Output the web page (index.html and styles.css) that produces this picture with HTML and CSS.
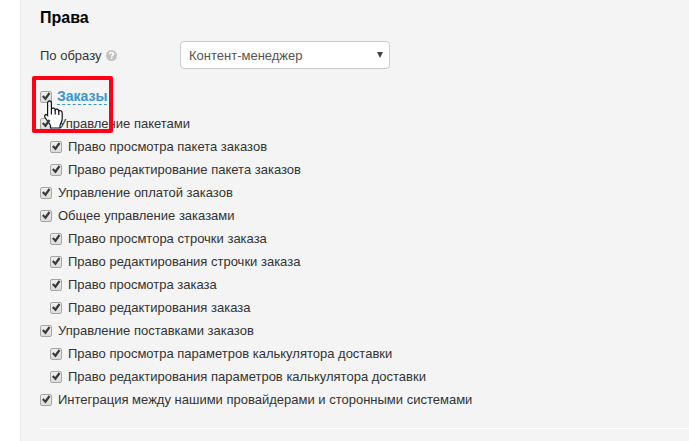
FILE: index.html
```html
<!DOCTYPE html>
<html lang="ru">

<head>
    <meta charset="UTF-8">
    <meta name="viewport" content="width=device-width, initial-scale=1.0">
    <title>Права</title>
    <link rel="stylesheet" href="styles.css">
</head>

<body>
    <form class="panel">
        <h2 class="title">Права</h2>

        <div class="field">
            <label class="field-label" for="preset">По образу
                <svg class="help" viewBox="0 0 11 11" aria-hidden="true">
                    <circle cx="5.5" cy="5.5" r="5.5" fill="#c2c2c2"/>
                    <path d="M3.6 4.3C3.6 1.8 7.5 1.9 7.4 4.1C7.3 5.4 5.6 5.3 5.6 6.7" fill="none" stroke="#fff" stroke-width="1.5"/>
                    <path d="M4.8 7.5h1.6v1.5H4.8z" fill="#fff"/>
                </svg>
            </label>
            <div class="select-wrap">
                <select class="select" id="preset">
                    <option>Контент-менеджер</option>
                </select>
            </div>
        </div>

        <div class="group">
            <input type="checkbox" id="orders" aria-label="Заказы" checked>
            <a class="group-link" href="#rights">Заказы</a>
            <div class="frame"></div>
            <svg class="pointer" viewBox="0 0 19 29" aria-hidden="true">
                <path d="M3.6 15V3C3.6 .2 7.4 .2 7.4 3V9C8 7.7 11 7.8 11.2 9.8C12 8.6 14.6 9 14.8 11C15.8 10 18.2 10.8 18.2 13V19C18.2 22 16 23.5 16 26V28H6.5V25.5C5 22.5 2.8 20.5 1 17.5C0 15 2 13.4 3.6 15.5Z" fill="#fff" stroke="#111126" stroke-width="1.2"/>
                <path d="M7.4 9V14.5M11.2 9.8V14.5M14.8 11V15" fill="none" stroke="#111126" stroke-width="1.2"/>
            </svg>
        </div>

        <ul class="rights" id="rights">
            <li><label><input type="checkbox" checked>Управление пакетами</label>
                <ul>
                    <li><label><input type="checkbox" checked>Право просмотра пакета заказов</label></li>
                    <li><label><input type="checkbox" checked>Право редактирование пакета заказов</label></li>
                </ul>
            </li>
            <li><label><input type="checkbox" checked>Управление оплатой заказов</label></li>
            <li><label><input type="checkbox" checked>Общее управление заказами</label>
                <ul>
                    <li><label><input type="checkbox" checked>Право просмтора строчки заказа</label></li>
                    <li><label><input type="checkbox" checked>Право редактирования строчки заказа</label></li>
                    <li><label><input type="checkbox" checked>Право просмотра заказа</label></li>
                    <li><label><input type="checkbox" checked>Право редактирования заказа</label></li>
                </ul>
            </li>
            <li><label><input type="checkbox" checked>Управление поставками заказов</label>
                <ul>
                    <li><label><input type="checkbox" checked>Право просмотра параметров калькулятора доставки</label></li>
                    <li><label><input type="checkbox" checked>Право редактирования параметров калькулятора доставки</label></li>
                </ul>
            </li>
            <li><label><input type="checkbox" checked>Интеграция между нашими провайдерами и сторонными системами</label></li>
        </ul>

        <hr class="divider">
    </form>
</body>

</html>
```

FILE: styles.css
```css
* {
    box-sizing: border-box;
}

body {
    margin: 0;
    padding-left: 20px;
    background-color: #fff;
    color: #333;
    font-family: 'Liberation Sans', Arial, sans-serif;
    font-size: 13px;
}

.panel {
    min-height: 100vh;
    padding: 6px 0 10px 19px;
    border-left: 1px solid #e8e8e8;
    background-color: #f4f4f4;
}

.title {
    margin: 0 0 12px;
    color: #000;
    font-size: 16px;
    line-height: 23px;
}

.field {
    display: flex;
    align-items: center;
    margin-bottom: 16px;
}

.field-label {
    display: flex;
    align-items: center;
    gap: 4px;
    width: 140px;
}

.help {
    width: 11px;
    height: 11px;
}

.select-wrap {
    position: relative;
    width: 210px;
}

.select-wrap::after {
    content: '';
    position: absolute;
    top: 11px;
    right: 7px;
    border: 3px solid transparent;
    border-top: 6px solid #444;
    border-bottom: 0;
    pointer-events: none;
}

.select {
    display: block;
    width: 100%;
    height: 28px;
    padding: 0 24px 0 8px;
    border: 1px solid #ccc;
    border-radius: 4px;
    background-color: #fff;
    color: #555;
    font: inherit;
    appearance: none;
}

/* checkboxes */

input[type="checkbox"] {
    flex: none;
    width: 12px;
    height: 12px;
    margin: 0;
    border: 1px solid #a6a6a6;
    border-radius: 2px;
    background: linear-gradient(#eee, #dcdcdc);
    appearance: none;
}

input[type="checkbox"]:checked::before {
    content: '';
    display: block;
    width: 10px;
    height: 10px;
    background-color: #3a3a3a;
    clip-path: polygon(10% 52%, 26% 38%, 42% 54%, 77% 8%, 94% 22%, 46% 90%);
}

.group {
    position: relative;
    display: flex;
    align-items: center;
    gap: 5px;
    height: 23px;
    margin-bottom: 4px;
}

.group-link {
    border-bottom: 1px dashed #3a96d2;
    color: #3a96d2;
    font-size: 14px;
    font-weight: bold;
    line-height: 16px;
    text-decoration: none;
}

.frame {
    position: absolute;
    top: -9px;
    left: -8px;
    width: 81px;
    height: 57px;
    border: 4px solid #fe0015;
    border-radius: 2px;
}

.pointer {
    position: absolute;
    top: 15px;
    left: 4px;
    width: 19px;
    height: 29px;
}

.rights,
.rights ul {
    margin: 0;
    padding: 0;
    list-style: none;
}

.rights ul {
    padding-left: 10px;
}

.rights label {
    display: flex;
    align-items: center;
    gap: 6px;
    line-height: 23px;
}

.divider {
    margin: 17px 0 0;
    border: 0;
    border-top: 1px solid #fff;
}
```
